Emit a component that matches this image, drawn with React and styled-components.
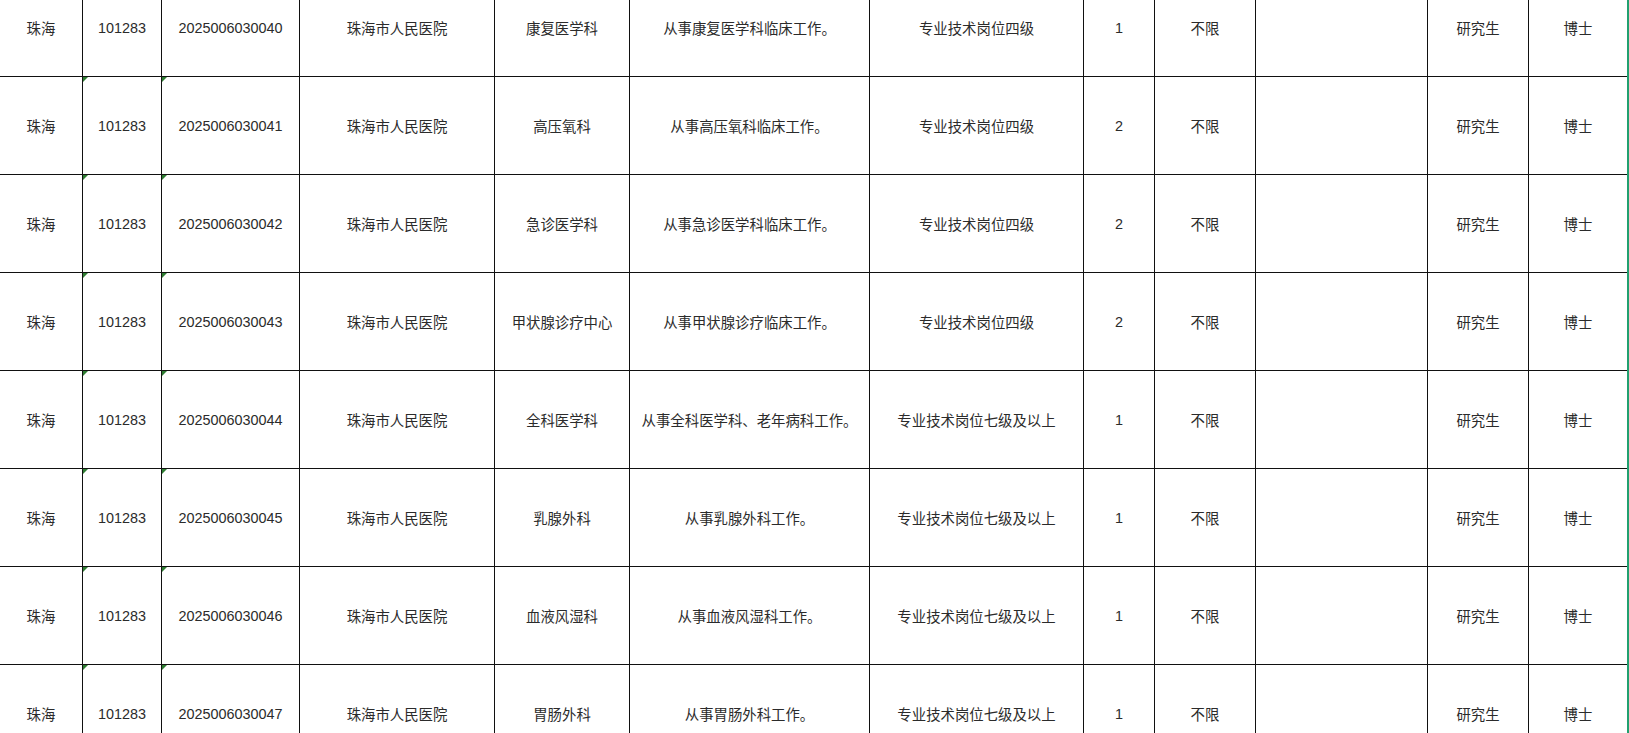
import React from "react";
import styled, { createGlobalStyle, css } from "styled-components";

const Global = createGlobalStyle`
  html, body { margin: 0; padding: 0; background: #ffffff; }
  body { overflow: hidden; }
`;

const Viewport = styled.div`
  width: 1629px;
  height: 733px;
  overflow: hidden;
  background: #fff;
  font-family: "Liberation Sans", "Noto Sans CJK SC", sans-serif;
  font-size: 14.4px;
  color: #2b2b2b;
`;

const Sheet = styled.div`
  display: grid;
  grid-template-columns: 83px 79px 138px 195px 135px 240px 214px 71px 101px 172px 101px 98px;
  grid-auto-rows: 98px;
  width: 1627px;
  margin-top: -21px;
  border-right: 2px solid #21a06f;
`;

const Cell = styled.div`
  position: relative;
  display: flex;
  align-items: center;
  justify-content: center;
  text-align: center;
  white-space: nowrap;
  box-sizing: border-box;
  border-bottom: 1px solid #111;
  border-right: ${(p) => (p.$last ? "none" : "1px solid #111")};
  ${(p) =>
    p.$flag &&
    css`
      &::before {
        content: "";
        position: absolute;
        left: 0;
        top: 0;
        width: 0;
        height: 0;
        border-top: 5px solid #2e7d32;
        border-right: 5px solid transparent;
      }
    `}
`;

const rows = [
  ["2025006030040", "康复医学科", "从事康复医学科临床工作。", "专业技术岗位四级", "1"],
  ["2025006030041", "高压氧科", "从事高压氧科临床工作。", "专业技术岗位四级", "2"],
  ["2025006030042", "急诊医学科", "从事急诊医学科临床工作。", "专业技术岗位四级", "2"],
  ["2025006030043", "甲状腺诊疗中心", "从事甲状腺诊疗临床工作。", "专业技术岗位四级", "2"],
  ["2025006030044", "全科医学科", "从事全科医学科、老年病科工作。", "专业技术岗位七级及以上", "1"],
  ["2025006030045", "乳腺外科", "从事乳腺外科工作。", "专业技术岗位七级及以上", "1"],
  ["2025006030046", "血液风湿科", "从事血液风湿科工作。", "专业技术岗位七级及以上", "1"],
  ["2025006030047", "胃肠外科", "从事胃肠外科工作。", "专业技术岗位七级及以上", "1"],
];

export default function App() {
  return (
    <>
      <Global />
      <Viewport>
        <Sheet>
          {rows.map(([code, dept, desc, level, num]) => (
            <React.Fragment key={code}>
              <Cell>珠海</Cell>
              <Cell $flag>101283</Cell>
              <Cell $flag>{code}</Cell>
              <Cell>珠海市人民医院</Cell>
              <Cell>{dept}</Cell>
              <Cell>{desc}</Cell>
              <Cell>{level}</Cell>
              <Cell>{num}</Cell>
              <Cell>不限</Cell>
              <Cell></Cell>
              <Cell>研究生</Cell>
              <Cell $last>博士</Cell>
            </React.Fragment>
          ))}
        </Sheet>
      </Viewport>
    </>
  );
}
